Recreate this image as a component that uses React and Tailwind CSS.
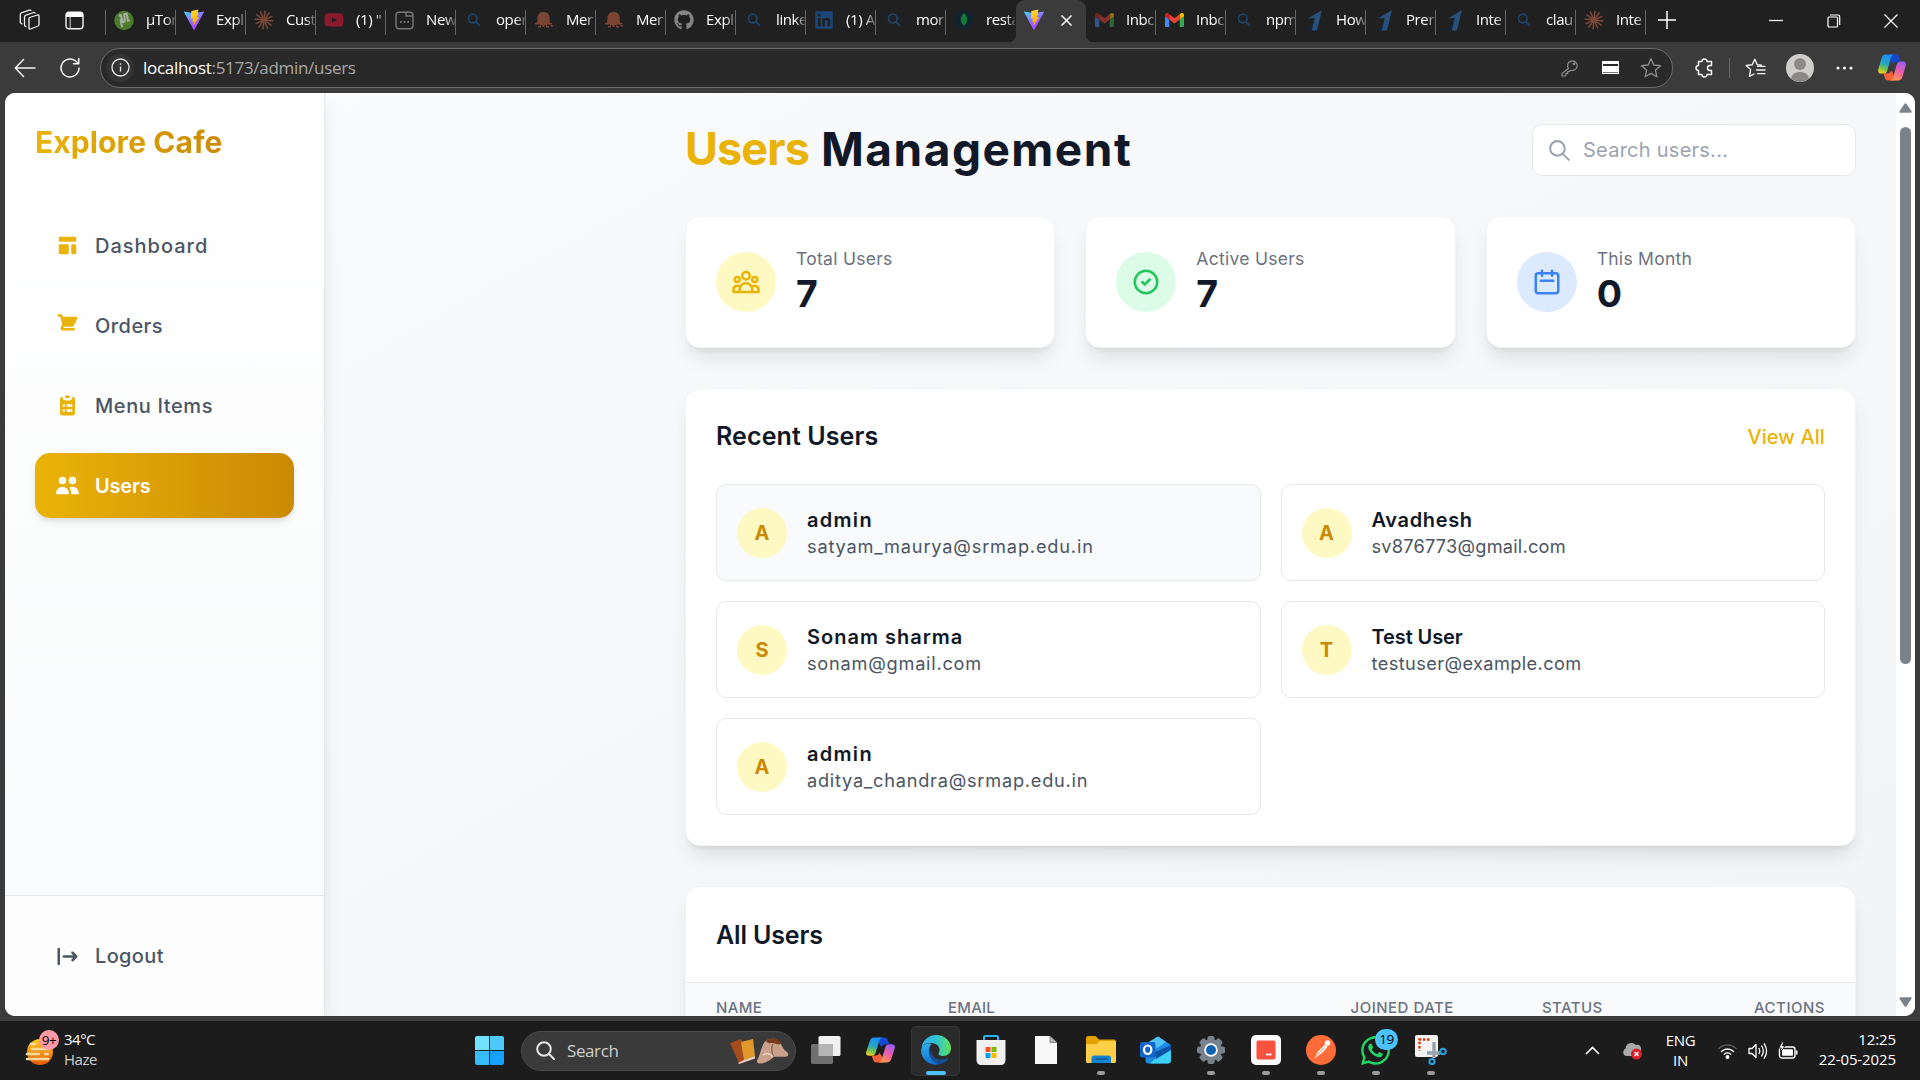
import React from "react";
import {
  HiTemplate,
  HiClipboardList,
  HiUsers,
  HiLogout,
  HiOutlineUserGroup,
  HiOutlineCheckCircle,
  HiOutlineCalendar,
  HiOutlineSearch,
} from "react-icons/hi";
import { FaGithub, FaLinkedin, FaYoutube, FaWhatsapp } from "react-icons/fa";

/* ---------- favicons ---------- */

const Vite = ({ id }) => (
  <svg width="20" height="24" viewBox="0 0 20 24" preserveAspectRatio="none">
    <defs>
      <linearGradient id={id + "a"} x1="0" y1="0" x2="0.6" y2="1">
        <stop offset="0" stopColor="#41d1ff" />
        <stop offset="0.5" stopColor="#8d78ff" />
        <stop offset="1" stopColor="#bd34fe" />
      </linearGradient>
      <linearGradient id={id + "b"} x1="0" y1="0" x2="0.2" y2="1">
        <stop offset="0" stopColor="#ffdd35" />
        <stop offset="1" stopColor="#ffa800" />
      </linearGradient>
    </defs>
    <path d="M0.3 3.4 L10 5.2 L19.7 3.4 Q20.2 3.6 19.9 4.2 L10.6 21.6 Q10 22.3 9.4 21.6 L0.1 4.2 Q-0.1 3.6 0.3 3.4Z" fill={`url(#${id}a)`} />
    <path d="M14.4 1.6 L7.4 3 L6.8 10.6 L9 10.2 L8.3 14 L10 13.4 L9.2 18 L15 9 L12.6 9.4 L14.6 5.6 L13.6 5.6Z" fill={`url(#${id}b)`} />
  </svg>
);

const Torrent = () => (
  <svg width="21" height="21" viewBox="0 0 21 21">
    <circle cx="10.5" cy="10.5" r="10.2" fill="#4a7c2c" />
    <path d="M5 5.5l2.2-.6 1.5 6.2c.4 1.6 2.6 1.5 2.700-.1L10.800 4l2.500-.6 1.500 7.300 1.700-.3" fill="none" stroke="#a8aca4" strokeWidth="2.2" />
    <path d="M6.800 9l1.700 8.500" stroke="#a8aca4" strokeWidth="2.2" />
  </svg>
);

const Burst = () => (
  <svg width="20" height="20" viewBox="-10 -10 20 20" stroke="#7d4a38" strokeWidth="1.5" strokeLinecap="round">
    {[0, 30, 60, 90, 120, 150, 180, 210, 240, 270, 300, 330].map((a) => (
      <line key={a} x1="0" y1="0" x2="0" y2="-8.8" transform={`rotate(${a + 6})`} />
    ))}
  </svg>
);

const Page = () => (
  <svg width="19" height="19" viewBox="0 0 19 19" fill="none" stroke="#777" strokeWidth="1.4">
    <rect x="1" y="1.2" width="17" height="16.6" rx="3" />
    <path d="M11 1.200v3.800h6.800" />
    <path d="M5 11h1.600M8.700 11h1.600M12.400 11h1.600" strokeWidth="2" />
  </svg>
);

const Lens = () => (
  <svg width="14" height="14" viewBox="0 0 14 14" fill="none" stroke="#1d4468" strokeWidth="1.7" strokeLinecap="round">
    <circle cx="5.8" cy="5.5" r="4.3" />
    <path d="M9 8.800l3.600 3.800" />
  </svg>
);

const Squid = () => (
  <svg width="20" height="18" viewBox="0 0 20 18" fill="#7c4433">
    <path d="M3.400 10V7.200a6 6.400 0 0 1 12.300 0V10c0 1.500 1 2 2.300 2v1.500H13V15h2v1.500h-3V14h-1.500v2h-2v-2H7v2.500H4V15h2v-1.500H1V12c1.500 0 2.400-.5 2.400-2Z" />
    <path d="M16.500 14h2.500v1.500h-2.500z" />
  </svg>
);

const Leaf = () => (
  <svg width="20" height="20" viewBox="0 0 20 20">
    <circle cx="10" cy="10" r="9.8" fill="#13232b" />
    <path d="M10 3c5 5 3.500 10 .2 12.300L10 17l-.3-1.700C6.500 13 5 8 10 3Z" fill="#147a3c" />
  </svg>
);

const Gmail = () => (
  <svg width="19" height="14" viewBox="0 0 19 14">
    <path d="M0 3v9.700c0 .7.6 1.300 1.300 1.300h3V6.500Z" fill="#4285f4" />
    <path d="M19 3v9.700c0 .7-.6 1.300-1.300 1.300h-3V6.500Z" fill="#34a853" />
    <path d="M14.700 1.300V6.500L19 3.300V2c0-2-1.900-2.500-3-1.700Z" fill="#fbbc04" />
    <path d="M4.300 6.500V1.300L9.500 5.200l5.200-3.900v5.200L9.500 10.400Z" fill="#ea4335" />
    <path d="M0 2v1.300l4.300 3.200V1.300L3 .3C1.900-.5 0 0 0 2Z" fill="#c5221f" />
  </svg>
);

const BlueOne = () => (
  <svg width="18" height="21" viewBox="0 0 18 21">
    <path d="M3 8.500 17 0 12 20.500H6.500L9.800 8Z" fill="#27507c" />
    <path d="M1 20.500C4 19 7 15 9 10.500L6.500 20.500Z" fill="#14253f" />
  </svg>
);

const Copilot = ({ id, w, h }) => (
  <svg width={w} height={h} viewBox="0 0 28 28" preserveAspectRatio="none">
    <defs>
      <linearGradient id={id + "l"} x1="0.5" y1="0" x2="0.2" y2="1">
        <stop offset="0" stopColor="#1d8ff0" />
        <stop offset="0.45" stopColor="#22a6c8" />
        <stop offset="0.7" stopColor="#6cc253" />
        <stop offset="1" stopColor="#ffd11a" />
      </linearGradient>
      <linearGradient id={id + "r"} x1="0.7" y1="0" x2="0.3" y2="1">
        <stop offset="0" stopColor="#9a5cf5" />
        <stop offset="0.5" stopColor="#ee5ea8" />
        <stop offset="1" stopColor="#ff9a4a" />
      </linearGradient>
    </defs>
    <path d="M11 .5h7c2 0 2.800 1.500 3.300 3.500L22.500 8h-4c-2 0-2.800 1.200-3.300 3L13 8Z" fill="#1747d1" />
    <path d="M17 27.500h-7c-2 0-2.800-1.500-3.300-3.500L5.500 20h4c2 0 2.800-1.200 3.300-3L15 20Z" fill="#f4603a" />
    <path d="M8 .5h8c-2 .5-2.700 2-3.300 4L9.300 17c-.6 2-1.800 3.300-4 3.300H3c-2.500 0-3.300-2-2.700-4.500L3.500 4.500C4.200 2 5.500.5 8 .5Z" fill={`url(#${id}l)`} />
    <path d="M20 27.500h-8c2-.5 2.700-2 3.300-4L18.700 11c.6-2 1.800-3.300 4-3.300H25c2.500 0 3.300 2 2.700 4.500l-3.200 11.300c-.7 2.500-2 4-4.500 4Z" fill={`url(#${id}r)`} />
  </svg>
);

const TABS_LEFT = [
  ["µTor", <Torrent />],
  ["Expl", <Vite id="v1" />],
  ["Cust", <Burst />],
  ['(1) "', <FaYoutube size={22} color="#8c1a2f" />],
  ["New", <Page />],
  ["oper", <Lens />],
  ["Mer", <Squid />],
  ["Mer", <Squid />],
  ["Expl", <FaGithub size={20} color="#858585" />],
  ["linke", <Lens />],
  ["(1) A", <FaLinkedin size={20} color="#1a4778" />],
  ["mor", <Lens />],
  ["resta", <Leaf />],
];

const TABS_RIGHT = [
  ["Inbc", <span className="opacity-50"><Gmail /></span>],
  ["Inbc", <Gmail />],
  ["npm", <Lens />],
  ["How", <BlueOne />],
  ["Prer", <BlueOne />],
  ["Inte", <BlueOne />],
  ["clau", <Lens />],
  ["Inte", <Burst />],
];

function Tab({ label, icon, last }) {
  return (
    <div className="flex h-[42px] w-[70px] shrink-0 items-center">
      <span className="mb-[2px] ml-2 flex w-5 shrink-0 items-center justify-center">{icon}</span>
      <span className="mb-[3px] ml-3 w-[29px] whitespace-nowrap text-[15px] tracking-[-0.4px] text-white [mask-image:linear-gradient(to_right,black_65%,transparent_110%)]">
        {label}
      </span>
      {!last && <span className="mt-[2px] h-[25px] w-px bg-[#666]" />}
    </div>
  );
}

function TabStrip() {
  return (
    <div className="flex h-[42px] items-center bg-[#202020]">
      <div className="flex w-[105px] items-center">
        <svg className="mb-[2px] ml-[19px]" width="22" height="22" viewBox="0 0 22 22" fill="none" stroke="#f2f2f2" strokeWidth="1.3" strokeLinejoin="round">
          <path d="M10.500 8.500 18.500 6q1.500-.4 1.500 1v8.500q0 1-1 1.500L11.500 20q-1.500.5-1.500-1V9.500q0-.7.5-1Z" />
          <path d="M7.500 17.500 6.500 17.500q-1-.3-1-1.500V8q0-1.300 1-1.700L14.500 3.500q1.500-.3 1.700 1" />
          <path d="M3.500 15 2.300 14.600q-1-.4-1-1.500V5.500q0-1.200 1-1.600L10.300 1.200q1.500-.4 1.800.7" />
        </svg>
        <svg className="mb-[1px] ml-[24px]" width="19" height="19" viewBox="0 0 19 19" fill="none">
          <rect x="1" y="1.2" width="17" height="16.6" rx="3" stroke="#f4f4f4" strokeWidth="1.4" />
          <path d="M1 6V4a3 3 0 0 1 3-3h11a3 3 0 0 1 3 3v2Z" fill="#fff" />
          <path d="M5.200 6v11.500" stroke="#bbb" strokeWidth="1.2" />
        </svg>
      </div>
      <span className="mt-[2px] h-[25px] w-px bg-[#666]" />
      {TABS_LEFT.map(([label, icon], i) => (
        <Tab key={i} label={label} icon={icon} last={i === TABS_LEFT.length - 1} />
      ))}
      <div className="relative flex h-[42px] w-[70px] shrink-0 items-center rounded-t-[9px] bg-[#3b3b3b] pb-[2px]">
        <span className="absolute bottom-0 -left-[8px] size-[8px] bg-[radial-gradient(circle_at_top_left,transparent_8px,#3b3b3b_8.500px)]" />
        <span className="absolute -right-[8px] bottom-0 size-[8px] bg-[radial-gradient(circle_at_top_right,transparent_8px,#3b3b3b_8.500px)]" />
        <span className="ml-[8px]"><Vite id="v2" /></span>
        <svg className="ml-[17px]" width="11" height="11" viewBox="0 0 11 11" stroke="#fff" strokeWidth="1.5">
          <path d="M.5.5l10 10M10.500.5l-10 10" />
        </svg>
      </div>
      {TABS_RIGHT.map(([label, icon], i) => (
        <Tab key={i} label={label} icon={icon} />
      ))}
      <svg className="mb-[3px] ml-3" width="18" height="18" viewBox="0 0 18 18" stroke="#fff" strokeWidth="1.5">
        <path d="M9 0v18M0 9h18" />
      </svg>
      <div className="mr-[22px] ml-auto flex items-center gap-[43.500px]">
        <svg width="14" height="14" viewBox="0 0 14 14" stroke="#fff" strokeWidth="1.3"><path d="M0 6.500h14" /></svg>
        <svg width="14" height="14" viewBox="0 0 14 14" fill="none" stroke="#fff" strokeWidth="1.2">
          <rect x="1" y="3" width="9.5" height="10" rx="1" />
          <path d="M3 1h8q1.700 0 1.700 1.700V11" />
        </svg>
        <svg width="14" height="14" viewBox="0 0 14 14" stroke="#fff" strokeWidth="1.2"><path d="M.5.5l13 13M13.500.5l-13 13" /></svg>
      </div>
    </div>
  );
}

function Toolbar() {
  return (
    <div className="flex h-[51px] items-center bg-[#3b3b3b]">
      <svg className="ml-[14px]" width="22" height="20" viewBox="0 0 22 20" fill="none" stroke="#f4f4f4" strokeWidth="1.5" strokeLinecap="round" strokeLinejoin="round">
        <path d="M21 10H1.500M9.500 1.500 1.300 10l8.200 8.500" />
      </svg>
      <svg className="ml-[23px]" width="22" height="22" viewBox="0 0 22 22" fill="none" stroke="#f4f4f4" strokeWidth="1.5" strokeLinecap="round" strokeLinejoin="round">
        <path d="M20 11a9 9 0 1 1-3.300-7L19.500 6.500" />
        <path d="M19.700 1.500v5.200h-5.200" />
      </svg>
      <div className="ml-[19px] flex h-[40px] w-[1573px] items-center rounded-full border border-[#6c6c6c] bg-[#292929]">
        <span className="ml-[5px] flex size-[28px] items-center justify-center rounded-full bg-[#333]">
          <svg width="19" height="19" viewBox="0 0 19 19" fill="none" stroke="#e4e4e4" strokeWidth="1.4">
            <circle cx="9.5" cy="9.5" r="8.5" />
            <path d="M9.500 8.500v5M9.500 5.200v1.600" />
          </svg>
        </span>
        <span className="ml-[9px] text-[17px] tracking-[-0.3px] text-[#a8a8a8]">
          <span className="text-white">localhost</span>:5173/admin/users
        </span>
        <div className="mr-[10px] ml-auto flex items-center gap-[21px]">
          <svg className="mr-[2px]" width="18" height="18" viewBox="0 0 18 18" fill="none" stroke="#8c8c8c" strokeWidth="1.2" strokeLinejoin="round">
            <path d="M7.500 9.500a4.800 4.800 0 1 1 2.300 1.700L8.500 12.500H6.700v1.800H5v1.800L4 17H1v-2.500Z" />
            <circle cx="13" cy="4.8" r=".8" fill="#8c8c8c" />
          </svg>
          <svg width="17" height="13" viewBox="0 0 17 13" shapeRendering="crispEdges">
            <rect x="0" y="0" width="17" height="13" rx="1" fill="#fff" />
            <rect x="1" y="3" width="15" height="2" fill="#292929" />
            <rect x="1" y="11" width="15" height="1" fill="#777" />
          </svg>
          <svg width="22" height="22" viewBox="0 0 22 22" fill="none" stroke="#909090" strokeWidth="1.3" strokeLinejoin="round">
            <path d="M11 1.800 13.800 8l6.600.7-5 4.500 1.500 6.600L11 16.400l-5.900 3.400 1.500-6.600-5-4.500L8.200 8Z" />
          </svg>
        </div>
      </div>
      <svg className="ml-[21px]" width="20" height="20" viewBox="0 0 20 20" fill="none" stroke="#f4f4f4" strokeWidth="1.5" strokeLinejoin="round">
        <path d="M4.500 3.500H8a2.500 2.500 0 0 1 5 0h4.500v4H16a2.500 2.500 0 0 0 0 5h1.500v4H13a2.500 2.500 0 0 1-5 0H4.500v-4a2.500 2.500 0 0 1 0-5Z" />
      </svg>
      <span className="ml-[15px] h-5 w-px bg-[#666]" />
      <svg className="ml-[15px]" width="21" height="20" viewBox="0 0 21 20" fill="none" stroke="#f4f4f4" strokeWidth="1.4" strokeLinejoin="round" strokeLinecap="round">
        <path d="M16.500 7.200 12.300 6.800 9.800 1.200 7.200 6.800 1.200 7.400 5.600 11.500 4.500 18.400 9 16" />
        <path d="M12.500 8.400H20M11.500 12H20M12.500 15.600H20" strokeWidth="1.3" />
      </svg>
      <svg className="ml-[20px]" width="28" height="28" viewBox="0 0 28 28">
        <circle cx="14" cy="14" r="14" fill="#cfcdca" />
        <circle cx="14" cy="10" r="6" fill="#8c8986" />
        <path d="M5 24.500c1-4.500 4.500-6.500 9-6.500s8 2 9 6.500A14 14 0 0 1 14 28 14 14 0 0 1 5 24.500Z" fill="#8c8986" />
      </svg>
      <svg className="ml-[22px]" width="17" height="4" viewBox="0 0 17 4" fill="#f4f4f4">
        <circle cx="2" cy="2" r="1.6" /><circle cx="8.5" cy="2" r="1.6" /><circle cx="15" cy="2" r="1.6" />
      </svg>
      <span className="ml-[25px]"><Copilot id="c1" w={28} h={27} /></span>
    </div>
  );
}

/* ---------- sidebar ---------- */

const Cart = ({ size }) => (
  <svg width={size} height={size} viewBox="0 0 20 20" fill="currentColor">
    <path d="M3 1a1 1 0 000 2h1.220l.305 1.222a.997.997 0 00.010.042l1.358 5.430-.893.892C3.740 11.846 4.632 14 6.414 14H15a1 1 0 000-2H6.414l1-1H14a1 1 0 00.894-.553l3-6A1 1 0 0017 3H6.280l-.310-1.243A1 1 0 005 1H3z" />
  </svg>
);

const NAV = [
  ["Dashboard", HiTemplate, "tracking-[1px]"],
  ["Orders", Cart, "tracking-[0.45px]"],
  ["Menu Items", HiClipboardList, "tracking-[0.6px]"],
];

function Sidebar() {
  return (
    <aside className="z-10 flex w-[320px] shrink-0 flex-col border-r border-gray-200 bg-linear-to-b from-white to-gray-50 shadow-[0_12px_19px_-4px_rgba(0,0,0,0.12),0_5px_8px_-5px_rgba(0,0,0,0.1)]">
      <div className="px-[30px] pt-[29px]">
        <span className="inline-block bg-linear-to-r from-[#eab308] to-[#ca8a04] bg-clip-text text-[30px] leading-[40px] font-bold tracking-[0.1px] text-transparent">
          Explore Cafe
        </span>
      </div>
      <nav className="mt-[51px] flex flex-col gap-[15px] px-[30px] text-[20px] font-medium">
        {NAV.map(([label, Icon, track]) => (
          <div key={label} className="flex h-[65px] items-center gap-[15px] px-5 text-[#4b5563]">
            <span className="text-[#eab308]"><Icon size={25} /></span>
            <span className={track}>{label}</span>
          </div>
        ))}
        <div className="flex h-[65px] items-center gap-[15px] rounded-[15px] bg-linear-to-r from-[#eab308] to-[#ca8a04] px-5 font-semibold text-white shadow-[0_5px_8px_-1px_rgba(0,0,0,0.1),0_3px_5px_-3px_rgba(0,0,0,0.1)]">
          <HiUsers size={25} />
          <span className="tracking-[-0.2px]">Users</span>
        </div>
      </nav>
      <div className="mt-auto flex h-[121px] items-center gap-[15px] border-t border-gray-200 bg-white/60 px-[50px] text-[20px] font-medium text-[#4b5563]">
        <HiLogout size={25} />
        <span className="tracking-[0.35px]">Logout</span>
      </div>
    </aside>
  );
}

/* ---------- main content ---------- */

function Stat({ label, value, Icon, badge }) {
  return (
    <div className="flex h-[132px] items-center gap-5 rounded-[15px] border border-gray-100 bg-white pl-[30px] shadow-[0_12.5px_19px_-4px_rgba(0,0,0,0.1),0_5px_7.5px_-5px_rgba(0,0,0,0.1)]">
      <span className={"flex size-[60px] items-center justify-center rounded-full " + badge}>
        <Icon size={30} />
      </span>
      <div className="pb-[3px]">
        <div className="text-[17.5px] leading-[25px] tracking-[0.28px] text-[#6b7280]">{label}</div>
        <div className="text-[37.5px] leading-[45px] font-bold text-[#111827]">{value}</div>
      </div>
    </div>
  );
}

const RECENT = [
  ["A", "admin", "satyam_maurya@srmap.edu.in", "tracking-[1.3px]", "tracking-[0.82px]"],
  ["A", "Avadhesh", "sv876773@gmail.com", "tracking-[0.65px]", "tracking-[0.22px]"],
  ["S", "Sonam sharma", "sonam@gmail.com", "tracking-[1px]", "tracking-[0.76px]"],
  ["T", "Test User", "testuser@example.com", "tracking-[-0.1px]", "tracking-[0.4px]"],
  ["A", "admin", "aditya_chandra@srmap.edu.in", "tracking-[1.3px]", "tracking-[0.76px]"],
];

function UserCard({ initial, name, email, nameTrack, emailTrack, active }) {
  return (
    <div className={"flex h-[97px] items-center gap-5 rounded-[10px] border border-gray-200 px-5 " + (active ? "bg-gray-50" : "bg-white")}>
      <span className="flex size-[50px] items-center justify-center rounded-full bg-[#fef9c3] text-[20px] font-bold text-[#ca8a04]">
        {initial}
      </span>
      <div>
        <div className={"text-[20px] leading-[30px] font-semibold text-[#111827] " + nameTrack}>{name}</div>
        <div className={"-mt-px mb-px text-[18.2px] leading-[25px] text-[#4b5563] " + emailTrack}>{email}</div>
      </div>
    </div>
  );
}

function Main() {
  return (
    <main className="flex flex-1 flex-col gap-[40px] overflow-hidden bg-linear-to-br from-gray-50 to-gray-100 pt-[31px] pr-[40px] pl-[360px]">
      <header className="flex h-[52px] shrink-0 items-center justify-between">
        <h1 className="flex gap-[12px] pb-[3px] text-[45px] leading-[50px] font-bold">
          <span className="tracking-[-0.9px] text-[#eab308]">Users</span>
          <span className="text-[46px] tracking-[1.500px] text-[#111827]">Management</span>
        </h1>
        <div className="flex h-[52px] w-[324px] items-center gap-[11px] rounded-[10px] border border-gray-200 bg-white pl-[14px] text-[#9ca3af]">
          <HiOutlineSearch size={25} />
          <span className="text-[20px] tracking-[0.25px]">Search users...</span>
        </div>
      </header>

      <section className="grid shrink-0 grid-cols-3 gap-[30px]">
        <Stat label="Total Users" value="7" Icon={HiOutlineUserGroup} badge="bg-[#fef9c3] text-[#eab308]" />
        <Stat label="Active Users" value="7" Icon={HiOutlineCheckCircle} badge="bg-[#dcfce7] text-[#22c55e]" />
        <Stat label="This Month" value="0" Icon={HiOutlineCalendar} badge="bg-[#dbeafe] text-[#3b82f6]" />
      </section>

      <section className="shrink-0 rounded-[15px] border border-gray-100 bg-white p-[30px] pt-[31px] shadow-[0_12.5px_19px_-4px_rgba(0,0,0,0.1),0_5px_7.5px_-5px_rgba(0,0,0,0.1)]">
        <div className="mb-[30px] flex h-[34px] items-center justify-between">
          <h2 className="text-[25px] font-semibold tracking-[0.1px] text-[#111827]">Recent Users</h2>
          <span className="text-[20px] font-medium tracking-[0.1px] text-[#eab308]">View All</span>
        </div>
        <div className="grid grid-cols-2 gap-5">
          {RECENT.map(([initial, name, email, nameTrack, emailTrack], i) => (
            <UserCard key={i} initial={initial} name={name} email={email} nameTrack={nameTrack} emailTrack={emailTrack} active={i === 0} />
          ))}
        </div>
      </section>

      <section className="shrink-0 overflow-hidden rounded-[15px] border border-gray-100 bg-white shadow-[0_12.5px_19px_-4px_rgba(0,0,0,0.1),0_5px_7.5px_-5px_rgba(0,0,0,0.1)]">
        <h2 className="flex h-[95px] items-center pt-[2px] pl-[30px] text-[25px] font-semibold tracking-[-0.15px] text-[#111827]">All Users</h2>
        <div className="flex h-[60px] items-start border-t border-gray-200 bg-gray-50 pt-[14px] pr-[30px] pl-[30px] text-[15px] leading-[22px] font-medium text-[#6b7280]">
          <span className="w-[232px] tracking-[0.4px]">NAME</span>
          <span className="w-[402.500px] tracking-[0.2px]">EMAIL</span>
          <span className="w-[191.500px] tracking-[0.5px]">JOINED DATE</span>
          <span className="tracking-[0.4px]">STATUS</span>
          <span className="ml-auto tracking-[0.5px]">ACTIONS</span>
        </div>
      </section>
    </main>
  );
}

function Scrollbar() {
  return (
    <div className="flex w-[19px] shrink-0 flex-col items-center bg-white pt-[10px] pb-[9px]">
      <svg width="13" height="10" viewBox="0 0 13 10" fill="#7b828a"><path d="M5.500.8q1-1.200 2 0l5 7.500q.5 1.500-1 1.500h-10q-1.500 0-1-1.500Z" /></svg>
      <span className="mt-[14px] h-[537px] w-[11px] rounded-full bg-[#7b828a]" />
      <svg className="mt-auto" width="13" height="10" viewBox="0 0 13 10" fill="#7b828a"><path d="M5.500 9.200q1 1.200 2 0l5-7.500q.5-1.500-1-1.500h-10q-1.500 0-1 1.500Z" /></svg>
    </div>
  );
}

/* ---------- taskbar ---------- */

const TaskView = () => (
  <svg width="30" height="28" viewBox="0 0 30 28">
    <rect x="7.5" y="0" width="22" height="20" rx="1.5" fill="#f0f0f0" />
    <rect x="0" y="8" width="22" height="20" rx="1.5" fill="#6f6f6f" />
    <rect x="7.5" y="8" width="14.5" height="12" fill="#b5b5b5" />
  </svg>
);

const Edge = () => (
  <svg width="30" height="30" viewBox="0 0 30 30">
    <defs>
      <linearGradient id="eg1" x1="0" y1="0.5" x2="1" y2="0.5">
        <stop offset="0" stopColor="#2fb0ef" /><stop offset="0.5" stopColor="#2fc4d4" /><stop offset="1" stopColor="#62e05a" />
      </linearGradient>
      <linearGradient id="eg2" x1="0" y1="0" x2="0.3" y2="1">
        <stop offset="0" stopColor="#35b4f0" /><stop offset="1" stopColor="#0f6fd0" />
      </linearGradient>
    </defs>
    <path d="M.5 13C1.500 5.500 7.500 0 15 0c9 0 15 6.500 15 13 0 5-3.500 8-8 8-3.500 0-5-1.500-4.500-2.700 2-2.500 1.500-8.300-4.500-9.800C7 7 2 9 .5 13Z" fill="url(#eg1)" />
    <path d="M.2 15C.8 9.500 6 7.500 10.500 9 6.500 13 7 22 13.500 26.500c2 1.500 4.500 2 6 2C17 30 10 30.800 5 26 1.500 23 0 19.500.2 15Z" fill="url(#eg2)" />
    <path d="M10.500 14c-1 5 2.500 10.500 9 10.500 3 0 5.500-.7 7-1.500.8-.4 1.200.3.8 1-2 3-5.300 4.800-8.300 5C11 28.500 6.500 20 10.500 14Z" fill="#134f96" />
  </svg>
);

const Store = () => (
  <svg width="30" height="30" viewBox="0 0 30 30">
    <path d="M8 7V2.200q0-1.200 1.200-1.200h11.600Q22 1 22 2.200V7" fill="none" stroke="#28b4f0" strokeWidth="2" />
    <path d="M.5 5h29v20q0 5-5 5h-19q-5 0-5-5Z" fill="#f0f0f0" />
    <path d="M9.500 12h5v5h-5z" fill="#f25022" /><path d="M15.500 12h5v5h-5z" fill="#7fba00" />
    <path d="M9.500 18h5v5h-5z" fill="#00a4ef" /><path d="M15.500 18h5v5h-5z" fill="#ffb900" />
  </svg>
);

const Doc = () => (
  <svg width="22" height="28" viewBox="0 0 22 28"><path d="M0 0h15l7 6.500V28H0Z" fill="#f8f8f8" /><path d="M15 0v6.500h7Z" fill="#bbb" stroke="#555" strokeWidth=".6" /></svg>
);

const Folder = () => (
  <svg width="30" height="28" viewBox="0 0 30 28">
    <path d="M0 2q0-2 2-2h7.500l3.500 3.500H28q2 0 2 2V12H0Z" fill="#e2a100" />
    <path d="M0 8h11l2.500-3H30v20.500q0 1.500-1.500 1.500h-27Q0 27 0 25.500Z" fill="#ffcf48" />
    <path d="M5.500 27v-5q0-2.500 2.500-2.500h14.500q2.500 0 2.500 2.500v5Z" fill="#1583d0" />
    <path d="M9.500 23h12" stroke="#0b5898" strokeWidth="1.5" />
  </svg>
);

const Outlook = () => (
  <svg width="31" height="28" viewBox="0 0 31 28">
    <path d="M5 9 18 0.500 31 9v15q0 3.500-3.500 3.500H9Q5.500 27.500 5.500 24Z" fill="#1c8de0" />
    <path d="M7 7 18 .5 26 6 14 14Z" fill="#4fc3f7" />
    <path d="M31 9v15q0 3.500-3.500 3.500H10Z" fill="#3fd0f5" />
    <path d="M15 16 31 9v5L16 23Z" fill="#0a51a8" />
    <rect x="0" y="6" width="15.5" height="15.5" rx="2" fill="#1166c8" />
    <ellipse cx="7.7" cy="13.7" rx="3.7" ry="4.2" fill="none" stroke="#fff" strokeWidth="2.2" />
  </svg>
);

const Gear = () => (
  <svg width="30" height="28" viewBox="-15 -14 30 28">
    {[0, 45, 90, 135].map((a) => (
      <rect key={a} x="-3.5" y="-14" width="7" height="28" rx="2" fill="#77828d" transform={`rotate(${a})`} />
    ))}
    <circle r="11" fill="#77828d" />
    <circle r="6.8" fill="#fff" />
    <circle r="5" fill="#0f62b4" />
  </svg>
);

const RedCard = () => (
  <svg width="30" height="30" viewBox="0 0 30 30">
    <rect width="30" height="30" rx="5" fill="#fafafa" />
    <rect x="5.5" y="5.5" width="19" height="19" rx="2" fill="#f9533f" />
    <path d="M15 19.500h5.500" stroke="#fff" strokeWidth="1.8" />
  </svg>
);

const Postman = () => (
  <svg width="30" height="30" viewBox="0 0 30 30">
    <circle cx="15" cy="15" r="15" fill="#ff6c37" />
    <circle cx="21.5" cy="8" r="2.8" fill="#fff" />
    <path d="M19 9.500l2.500 2.500-6 6.500-7.500 5 4-7Z" fill="#fff" />
    <path d="M8.500 22.500l10-10" stroke="#ff6c37" strokeWidth=".8" />
  </svg>
);

const Snip = () => (
  <svg width="32" height="30" viewBox="0 0 32 30">
    <rect x="0" y="0" width="23" height="22" rx="2" fill="#f3f3f3" />
    <path d="M14.500 4.500h-10v11" fill="none" stroke="#d83b01" strokeWidth="2.4" strokeDasharray="2.5 1.6" />
    <path d="M19 7v16M12 18h13" stroke="#98a3ad" strokeWidth="3.5" />
    <circle cx="28" cy="16.5" r="2.8" fill="none" stroke="#2aa0e4" strokeWidth="2" />
    <circle cx="17" cy="26.5" r="2.6" fill="none" stroke="#2aa0e4" strokeWidth="2" />
  </svg>
);

const WhatsApp = () => (
  <div className="relative">
    <FaWhatsapp size={33} color="#25d366" />
    <span className="absolute -top-[5px] left-[16px] flex h-[21px] w-[23px] items-center justify-center rounded-full bg-[#4cc2ff] text-[13.500px] tracking-[-0.5px] text-black">
      19
    </span>
  </div>
);

const APPS = [
  [<TaskView />, ""],
  [<Copilot id="c2" w={29} h={26} />, ""],
  [<Edge />, "active"],
  [<Store />, ""],
  [<Doc />, ""],
  [<Folder />, "open"],
  [<Outlook />, ""],
  [<Gear />, "open"],
  [<RedCard />, "open"],
  [<Postman />, "open"],
  [<WhatsApp />, "open"],
  [<Snip />, "open"],
];

function SearchArt() {
  return (
    <svg width="59" height="26" viewBox="0 0 59 26">
      <path d="M0 5 11 1 18 20 9 25Z" fill="#a44c1c" />
      <path d="M11 4 23 1 25 18 14 22Z" fill="#e0982a" />
      <path d="M8 25 14 22 25 18v2.500L9 26Z" fill="#efd0c0" />
      <path d="M27 22C31 17 31 4 38 1.500c6-2 11 0 13 4.500 2 4 3 6 6 8 2 1.500 1.500 4-.5 4.500-4 1-9-.5-13 .5-3 3-9 7-14 6.500-2 0-3-1.500-2.500-3Z" fill="#c9a08a" />
      <path d="M36 3c4-4 12-4 15 3-3 1.500-6-1-8-1-3 0-5 1-7-2Z" fill="#7a3d1c" />
      <path d="M43 6c-2 4-1.500 9 1 13" stroke="#8a6452" fill="none" strokeWidth="1.3" />
      <path d="M33 17c3-2 7-2 10 2" stroke="#ecd2c4" fill="none" strokeWidth="1.6" />
    </svg>
  );
}

function Taskbar() {
  return (
    <footer className="flex h-[59px] items-center bg-[#1c1c1c] text-[15px] leading-[20px] text-white">
      <div className="flex w-[475px] items-center">
        <div className="relative mt-[4px] ml-[25px] h-[30px] w-[33px]">
          <svg width="30" height="30" viewBox="0 0 30 30">
            <defs>
              <linearGradient id="sun" x1="0" y1="0" x2="0" y2="1"><stop offset="0" stopColor="#ffcd1a" /><stop offset="1" stopColor="#e8590c" /></linearGradient>
            </defs>
            <circle cx="15" cy="14" r="13" fill="url(#sun)" />
            <path d="M6 6h4M7 11h17M2 16h12M20 16h3M2 21h21" stroke="#f3d9a4" strokeWidth="2.6" strokeLinecap="round" />
          </svg>
          <span className="absolute -top-[8px] left-[14px] flex h-[20px] w-[20px] items-center justify-center rounded-full bg-[#ff99a4] text-[13.500px] tracking-[-0.5px] text-black">
            9+
          </span>
        </div>
        <div className="mb-[3px] ml-[6px] tracking-[-0.500px]">
          <div>34°C</div>
          <div className="text-[#cfcfcf]">Haze</div>
        </div>
      </div>
      <div className="grid grid-cols-2 gap-px">
        <span className="size-[14px] rounded-tl-[2px] bg-[#6fe3fd]" />
        <span className="size-[14px] rounded-tr-[2px] bg-[#4cc9fb]" />
        <span className="size-[14px] rounded-bl-[2px] bg-[#34bdfa]" />
        <span className="size-[14px] rounded-br-[2px] bg-[#15a0fb]" />
      </div>
      <div className="ml-[17px] flex h-[40px] w-[275px] items-center rounded-full border border-[#4a4a4a] bg-[#3a3a3a]">
        <svg className="ml-[14px]" width="19" height="19" viewBox="0 0 19 19" fill="none" stroke="#e6e6e6" strokeWidth="2" strokeLinecap="round">
          <circle cx="8" cy="8" r="6.8" /><path d="M13 13l5 5" />
        </svg>
        <span className="ml-[12px] text-[17px] tracking-[-0.400px] text-[#cfcfcf]">Search</span>
        <span className="mr-[6px] ml-auto"><SearchArt /></span>
      </div>
      <div className="ml-[2px] flex">
        {APPS.map(([icon, state], i) => (
          <div key={i} className="flex w-[55px] justify-center">
            <div className={"flex h-[50px] w-[49px] flex-col items-center rounded-[5px] " + (state === "active" ? "border border-[#363636] bg-[#2b2b2b]" : "border border-transparent")}>
              <div className="flex h-[44px] items-center justify-center pt-[3px]">{icon}</div>
              {state === "active" && <span className="h-1 w-5 rounded-full bg-[#4cc2ff]" />}
              {state === "open" && <span className="h-1 w-[8px] rounded-full bg-[#9a9a9a]" />}
            </div>
          </div>
        ))}
      </div>
      <div className="ml-auto flex items-center">
        <svg width="15" height="9" viewBox="0 0 15 9" fill="none" stroke="#fff" strokeWidth="1.6"><path d="M1 8l6.500-6.500L14 8" /></svg>
        <svg className="ml-[22px]" width="20" height="19" viewBox="0 0 20 19">
          <path d="M4 15a4 4 0 0 1-.5-7.500A6 6 0 0 1 14 4a4 4 0 0 1 2 8v3Z" fill="#a9a9a9" />
          <circle cx="14.5" cy="13" r="5.5" fill="#d9202a" />
          <path d="M12.500 11l4 4M16.500 11l-4 4" stroke="#fff" strokeWidth="1.4" />
        </svg>
        <div className="mb-[2px] ml-[23px] w-[31px] text-center tracking-[-0.300px]"><div>ENG</div><div>IN</div></div>
        <svg className="ml-[22px]" width="19" height="16" viewBox="0 0 19 16" fill="none" stroke="#fff" strokeWidth="1.5" strokeLinecap="round">
          <path d="M1 5.500a12 12 0 0 1 17 0" stroke="#5a5a5a" /><path d="M3.500 8.500a8.500 8.500 0 0 1 12 0M6.300 11.300a4.700 4.700 0 0 1 6.400 0" /><circle cx="9.5" cy="14" r="1.2" fill="#fff" />
        </svg>
        <svg className="ml-[11px]" width="20" height="18" viewBox="0 0 20 18" fill="none" stroke="#fff" strokeWidth="1.3" strokeLinecap="round" strokeLinejoin="round">
          <path d="M1 6.500h3L8 2.500v13l-4-4H1ZM11 6.500q1.500 2.500 0 5M13.700 4q3.200 5 0 10M16.300 1.800q4.500 7.200 0 14.400" />
        </svg>
        <svg className="ml-[10px]" width="20" height="18" viewBox="0 0 20 18">
          <rect x="1.5" y="5" width="15.5" height="11" rx="2.5" fill="none" stroke="#fff" strokeWidth="1.4" />
          <rect x="4" y="7.3" width="11" height="6.5" rx="1" fill="#fff" /><path d="M18 8.500h1.500v4H18z" fill="#fff" />
          <path d="M4 0 1 6h2.200L2.500 10 7 4H4.500L5.500 0Z" fill="#fff" stroke="#1c1c1c" strokeWidth=".8" />
        </svg>
        <div className="mr-6 mb-[3px] ml-[20px] w-[78px] text-right tracking-[-0.100px]"><div>12:25</div><div>22-05-2025</div></div>
      </div>
    </footer>
  );
}

export default function App() {
  return (
    <div className="flex h-[1080px] w-[1920px] flex-col overflow-hidden bg-[#3b3b3b] font-['Open_Sans',sans-serif]">
      <TabStrip />
      <Toolbar />
      <div className="mx-[5px] mb-[5px] flex h-[923px] overflow-hidden rounded-[10px] bg-white font-['Inter',sans-serif]">
        <Sidebar />
        <Main />
        <Scrollbar />
      </div>
      <Taskbar />
    </div>
  );
}
